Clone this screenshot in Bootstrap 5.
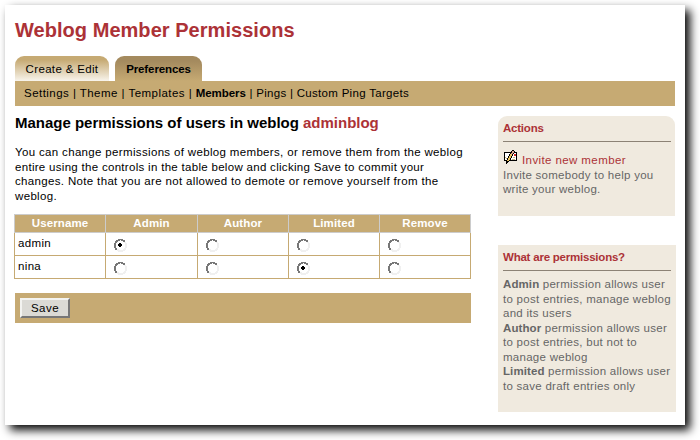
<!DOCTYPE html>
<html lang="en">
<head>
<meta charset="utf-8">
<title>Weblog Member Permissions</title>
<link href="https://cdn.jsdelivr.net/npm/bootstrap@5.3.0/dist/css/bootstrap.min.css" rel="stylesheet">
<style>
body{width:700px;height:440px;overflow:hidden;background:#fff;color:#000;font:11.5px/14.5px "Liberation Sans",Arial,sans-serif;letter-spacing:.34px}
.sheet{width:680px;height:420px;margin:5px;padding:14px 9px 0 10px;box-shadow:5px 5px 9px rgba(0,0,0,.98)}
.page-title{font-size:20px;line-height:22px;height:37px;color:#ac3237;letter-spacing:.04px}
.tabs{gap:6px}
.tabs .nav-link{height:25px;padding:6px 0 0;text-align:center;color:#000;border-radius:9px 9px 0 0;line-height:15px}
.tab-a{width:94px;background:linear-gradient(#c6aa73 15%,#f8f4ec)}
.tabs .tab-b{width:87px;background:linear-gradient(#a48a5e 20%,#c6aa73);letter-spacing:-.1px}
.menu-bar{width:660px;height:25px;padding:5px 9px;background:#c6aa73;line-height:15px;white-space:pre;letter-spacing:.3px}
.menu-bar b{letter-spacing:-.05px}
.menu-start{letter-spacing:.46px}
.main-col{width:457px}
.heading{font-size:15px;line-height:18px;margin:8px 0 13px;letter-spacing:-.01px;white-space:nowrap}
.red{color:#ac3237}
.intro{height:69px;white-space:nowrap}
.tighter{letter-spacing:.3px}
.perm{width:457px;margin-left:-1px;table-layout:fixed;border-collapse:collapse;color:#000}
.perm th{height:18px;padding:0;background:#c6aa73;border:1px solid #ccc;color:#fff;text-align:center;line-height:15px;letter-spacing:.12px}
.perm td{height:23px;padding:2px 0 0 3px;border:1px solid #c6aa73;vertical-align:top;line-height:17px}
.perm td+td{padding:6px 0 0 8px}
.perm svg{display:block}
.save-bar{width:456px;height:30px;margin-top:14px;padding:5px;background:#c6aa73}
.save-btn{width:50px;height:20px;padding:0;border:2px solid;border-color:#f3f3f0 #777 #777 #f3f3f0;border-radius:0;background:#dbdad5;color:#000;font-size:11.5px;line-height:16px;letter-spacing:.5px}
.side-col{width:178px;margin:10px 0 0 26px}
.panel{background:#f0eadf;color:#666;padding:5px 4px 0 5px;white-space:nowrap;letter-spacing:.27px}
.panel h2{font-size:11.5px;line-height:15px;height:21px;margin:0 0 11px;border-bottom:1px solid #8c8275;font-weight:bold;color:#ac3237;letter-spacing:-.22px}
.panel-a{width:177px;height:100px;border-radius:9px 9px 0 0;margin-bottom:29px}
.panel-b{width:178px;height:167px;padding-right:5px}
.panel-b h2{margin-bottom:6px}
.panel b{letter-spacing:.1px}
.invite-icon{margin:-3px 5px 0 1px}
.invite-link{letter-spacing:.4px}
</style>
<script src="https://cdn.jsdelivr.net/npm/bootstrap@5.3.0/dist/js/bootstrap.bundle.min.js"></script>
</head>
<body>
<svg width="0" height="0" class="position-absolute" aria-hidden="true">
<defs>
<g id="ring" fill="none" shape-rendering="crispEdges">
<path d="M10 2.5h1M10 3.5h2M11 4.5h2M11 5.5h2M11 6.5h2M11 7.5h2M11 8.5h2M10 9.5h2M9 10.5h3M3 11.5h8M4 12.5h5M3 10.5h2" stroke="#f0f0f0"/>
<path d="M4 .5h5M2 1.5h4M7 1.5h4M1 2.5h3M9 2.5h2M1 3.5h2M0 4.5h2M0 5.5h2M0 6.5h2M0 7.5h2M0 8.5h2M1 9.5h2M1 10.5h2" stroke="#777"/>
</g>
<path id="dot" d="M5 4h2v1h1v2h-1v1h-2v-1h-1v-2h1z" fill="#000" shape-rendering="crispEdges"/>
</defs>
</svg>
<main class="sheet">
<h1 class="page-title fw-bold m-0">Weblog Member Permissions</h1>
<nav class="nav tabs">
<a class="nav-link tab-a">Create &amp; Edit</a>
<a class="nav-link tab-b fw-bold">Preferences</a>
</nav>
<div class="menu-bar"><span class="menu-start">Settings | Theme | Templates | </span><b>Members</b> | Pings | Custom Ping Targets</div>
<div class="d-flex align-items-start">
<section class="main-col flex-shrink-0">
<h2 class="heading fw-bold">Manage permissions of users in weblog <span class="red">adminblog</span></h2>
<p class="intro mb-0">You can change permissions of weblog members, or remove them from the weblog<br><span class="tighter">entire using the controls in the table below and clicking Save to commit your</span><br>changes. Note that you are not allowed to demote or remove yourself from the<br>weblog.</p>
<table class="perm">
<colgroup><col style="width:91px"><col style="width:92px"><col style="width:91px"><col style="width:91px"><col style="width:91px"></colgroup>
<thead><tr><th>Username</th><th>Admin</th><th>Author</th><th>Limited</th><th>Remove</th></tr></thead>
<tbody>
<tr><td>admin</td><td><svg width="13" height="13"><use href="#ring"/><use href="#dot"/></svg></td><td><svg width="13" height="13"><use href="#ring"/></svg></td><td><svg width="13" height="13"><use href="#ring"/></svg></td><td><svg width="13" height="13"><use href="#ring"/></svg></td></tr>
<tr><td>nina</td><td><svg width="13" height="13"><use href="#ring"/></svg></td><td><svg width="13" height="13"><use href="#ring"/></svg></td><td><svg width="13" height="13"><use href="#ring"/><use href="#dot"/></svg></td><td><svg width="13" height="13"><use href="#ring"/></svg></td></tr>
</tbody>
</table>
<div class="save-bar d-flex"><button class="btn save-btn" type="button">Save</button></div>
</section>
<aside class="side-col flex-shrink-0">
<section class="panel panel-a">
<h2>Actions</h2>
<div class="d-flex">
<svg width="13" height="14" class="invite-icon flex-shrink-0" shape-rendering="crispEdges">
<path d="M0 2h13v9H0z"/>
<path d="M1 3h11v7H1z" fill="#fff"/>
<path d="M10 4h2v2h-2z" fill="#d92b2b"/>
<path d="M1 7h1v1H1zM2 8h1v1H2zM9 7h2v1H9zM8 9h3v1H8z" fill="#cbb985"/>
<path d="M8 0h2v1h1v2h-1v1H9v2H8v2H7v2H6v1H5v1H4v1H3v1H2v-3h1V8h1V6h1V4h1V3h1V1h1z"/>
<path d="M8 1h2v2H9v1H7V3h1z" fill="#d9a08c"/>
<path d="M6 4h2v2H7v2H6v2H5v1H3v-1h1V8h1V6h1z" fill="#ecc460"/>
</svg>
<span class="red invite-link">Invite new member</span>
</div>
Invite somebody to help you<br>write your weblog.
</section>
<section class="panel panel-b">
<h2>What are permissions?</h2>
<b>Admin</b> permission allows user<br>to post entries, manage weblog<br>and its users<br><b>Author</b> permission allows user<br>to post entries, but not to<br>manage weblog<br><b>Limited</b> permission allows user<br>to save draft entries only
</section>
</aside>
</div>
</main>
</body>
</html>
